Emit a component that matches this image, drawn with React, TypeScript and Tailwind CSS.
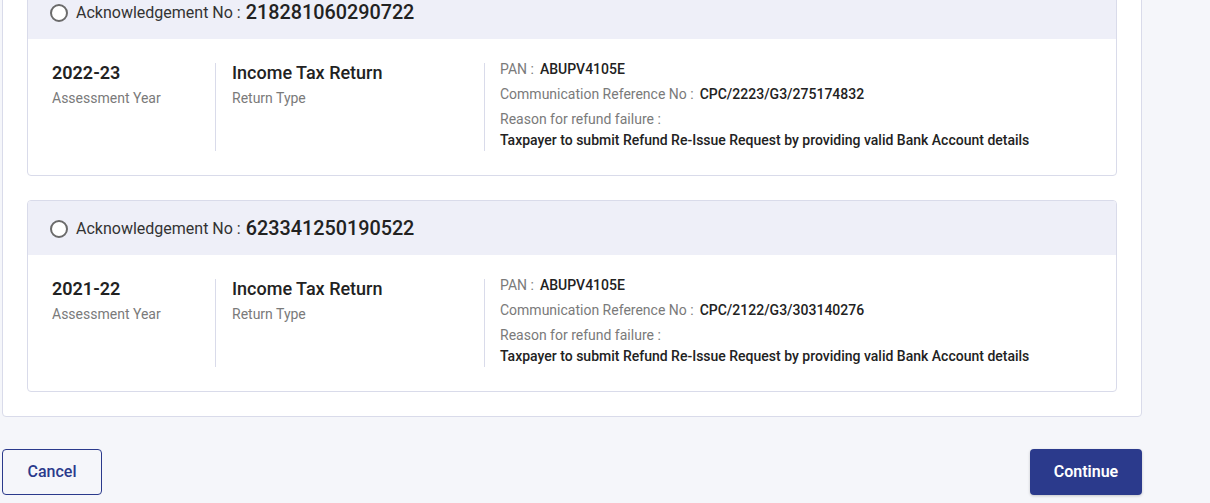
import React from 'react';

interface RefundItem {
  ackNo: string;
  year: string;
  returnType: string;
  pan: string;
  commRef: string;
  reason: string;
}

const items: RefundItem[] = [
  {
    ackNo: '218281060290722',
    year: '2022-23',
    returnType: 'Income Tax Return',
    pan: 'ABUPV4105E',
    commRef: 'CPC/2223/G3/275174832',
    reason: 'Taxpayer to submit Refund Re-Issue Request by providing valid Bank Account details',
  },
  {
    ackNo: '623341250190522',
    year: '2021-22',
    returnType: 'Income Tax Return',
    pan: 'ABUPV4105E',
    commRef: 'CPC/2122/G3/303140276',
    reason: 'Taxpayer to submit Refund Re-Issue Request by providing valid Bank Account details',
  },
];

const RefundCard: React.FC<{ item: RefundItem }> = ({ item }) => {
  return (
    <div className="border border-[#d9dbea] rounded-[4px] bg-white overflow-hidden">
      {/* header */}
      <div className="h-[54px] bg-[#eeeff8] flex items-center px-[22px] pt-[2px]">
        <span className="w-[18px] h-[18px] rounded-full border-2 border-[#6b6b6b] bg-white mr-[8px]" />
        <span className="text-[16px] text-[#333] leading-none">Acknowledgement No :</span>
        <span className="text-[19.8px] font-medium text-[#222] ml-[5px] leading-none">{item.ackNo}</span>
      </div>

      {/* body */}
      <div className="flex px-[24px] py-[24px]">
        <div className="w-[164px] border-r border-[#d9dbea] h-[88px]">
          <div className="text-[18px] font-semibold text-[#222] leading-[20px]">{item.year}</div>
          <div className="text-[14px] text-[#7a7a7a] leading-[20px] mt-[5px]">Assessment Year</div>
        </div>
        <div className="w-[269px] border-r border-[#d9dbea] pl-[16px]">
          <div className="text-[18px] font-medium text-[#222] leading-[20px]">{item.returnType}</div>
          <div className="text-[14px] text-[#7a7a7a] leading-[20px] mt-[5px]">Return Type</div>
        </div>
        <div className="pl-[15px] text-[14px] -mt-[1px]">
          <div className="leading-[14px]">
            <span className="text-[#7a7a7a]">PAN :</span>
            <span className="font-medium text-[#222] ml-[6px]">{item.pan}</span>
          </div>
          <div className="leading-[14px] mt-[11px]">
            <span className="text-[#7a7a7a]">Communication Reference No :</span>
            <span className="font-medium text-[#222] ml-[6px]">{item.commRef}</span>
          </div>
          <div className="leading-[14px] mt-[11px] text-[#7a7a7a]">Reason for refund failure :</div>
          <div className="leading-[14px] mt-[7px] font-medium text-[#222]">{item.reason}</div>
        </div>
      </div>
    </div>
  );
};

export default function App() {
  return (
    <div
      className="min-h-screen bg-[#f5f6fa] px-[2px] overflow-hidden"
      style={{ fontFamily: 'Roboto, "Noto Sans", sans-serif' }}
    >
      <div className="w-[1140px]">
        {/* panel, scrolled so its top is off screen */}
        <div className="-mt-[41px] bg-white border border-[#d9dbea] rounded-[4px] p-[24px] flex flex-col gap-[24px]">
          {items.map((it) => (
            <RefundCard key={it.ackNo} item={it} />
          ))}
        </div>

        {/* actions */}
        <div className="flex justify-between mt-[32px]">
          <button className="w-[100px] h-[46px] border border-[#2b3a8c] rounded-[4px] text-[16px] font-medium text-[#2b3a8c] bg-transparent">
            Cancel
          </button>
          <button className="w-[112px] h-[46px] rounded-[4px] bg-[#2b3a8c] text-white text-[16px] font-semibold shadow-[0_1px_3px_rgba(0,0,0,0.2)]">
            Continue
          </button>
        </div>
      </div>
    </div>
  );
}
